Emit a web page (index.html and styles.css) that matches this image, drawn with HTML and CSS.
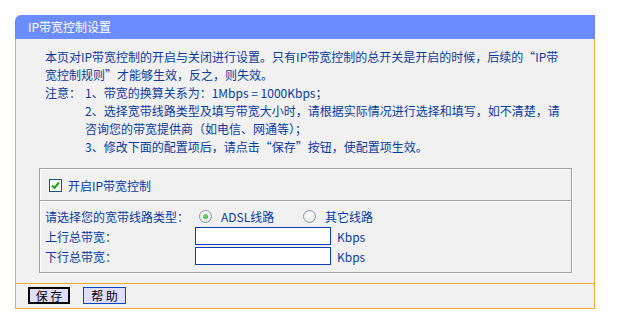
FILE: index.html
```html
<!DOCTYPE html>
<html lang="zh-CN">
<head>
<meta charset="utf-8">
<title>IP带宽控制设置</title>
<link rel="stylesheet" href="styles.css">
</head>
<body>
<div class="panel">
  <div class="title">IP带宽控制设置</div>
  <div class="content">
    <div class="intro">
      <p>本页对IP带宽控制的开启与关闭进行设置。只有IP带宽控制的总开关是开启的时候，后续的“IP带<br>宽控制规则”才能够生效，反之，则失效。</p>
      <div class="note">
        <span class="note-label">注意：</span>
        <div class="note-items">
          <div>1、带宽的换算关系为：1Mbps = 1000Kbps；</div>
          <div>2、选择宽带线路类型及填写带宽大小时，请根据实际情况进行选择和填写，如不清楚，请<br>咨询您的带宽提供商（如电信、网通等）；</div>
          <div>3、修改下面的配置项后，请点击“保存”按钮，使配置项生效。</div>
        </div>
      </div>
    </div>
    <div class="box">
      <div class="box-head">
        <label class="check">
          <span class="checkbox"><svg width="9" height="9" viewBox="0 0 9 9"><path d="M1 4.5 L3.5 7 L8 1.5" fill="none" stroke="#22a122" stroke-width="2"/></svg></span>
          <span>开启IP带宽控制</span>
        </label>
      </div>
      <div class="box-body">
        <span class="lbl">请选择您的宽带线路类型：</span>
        <div class="radios">
          <label class="opt"><span class="radio checked"></span>ADSL线路</label>
          <label class="opt"><span class="radio"></span>其它线路</label>
        </div>
        <span class="lbl">上行总带宽：</span>
        <div class="field"><input class="txt" type="text"><span class="unit">Kbps</span></div>
        <span class="lbl">下行总带宽：</span>
        <div class="field"><input class="txt" type="text"><span class="unit">Kbps</span></div>
      </div>
    </div>
  </div>
  <div class="actions">
    <button class="btn btn-default">保 存</button>
    <button class="btn">帮 助</button>
  </div>
</div>
</body>
</html>
```

FILE: styles.css
```css
* { box-sizing: border-box; }
html, body { margin: 0; padding: 0; background: #fff; }
body {
  padding: 15px 0 0 15px;
  font-family: "Noto Sans CJK SC", "Noto Sans", sans-serif;
  font-size: 12px;
  color: #0b3a9e;
}
.panel { width: 580px; }
.title {
  height: 24px;
  background: #6b8cff;
  color: #fff;
  line-height: 24px;
  padding-left: 13px;
  border-top-left-radius: 6px;
}
.content {
  background: #f1f1f1;
  border-left: 1px solid #f5a832;
  border-right: 1px solid #f5a832;
  padding: 9px 22px 10px 23px;
}
.intro { padding: 0 6px; line-height: 18px; }
.intro p { margin: 0; }
.note { display: grid; grid-template-columns: 40px 1fr; }
.box {
  margin-top: 12px;
  border: 1px solid #a0a0a0;
  box-shadow: inset 1px 1px 0 #fff, 1px 1px 0 #fff;
}
.box-head {
  height: 31px;
  display: flex;
  align-items: center;
  padding-left: 9px;
  padding-top: 1px;
}
.check { display: flex; align-items: center; gap: 6px; }
.checkbox {
  width: 13px; height: 13px;
  border: 1px solid #1c5180;
  background: #fff;
  display: flex; align-items: center; justify-content: center;
}
.box-body {
  border-top: 1px solid #a0a0a0;
  box-shadow: inset 0 1px 0 #fff;
  padding: 5px 0 6px 5px;
  display: grid;
  grid-template-columns: 150px 1fr;
  grid-auto-rows: 20px;
  align-items: center;
}
.radios { display: flex; padding-left: 4px; }
.opt { display: flex; align-items: center; gap: 9px; width: 104px; }
.radio {
  width: 13px; height: 13px;
  border-radius: 50%;
  border: 1px solid #8a98a6;
  background: radial-gradient(circle at 40% 35%, #fff 0, #f0f0f0 50%, #d6d6d6 100%);
  display: flex; align-items: center; justify-content: center;
}
.radio.checked::after {
  content: "";
  width: 5px; height: 5px; border-radius: 50%;
  background: radial-gradient(circle at 40% 40%, #7be07b, #1fa51f);
}
.field { display: flex; align-items: center; }
.txt {
  width: 136px; height: 18px;
  border: 1px solid #0b3fb0;
  background: #fff;
  margin: 0; padding: 0 2px;
  font: inherit;
}
.unit { margin-left: 6px; }
.actions {
  background: #f1f1f1;
  border: 1px solid #f5a832;
  padding: 3px 12px 4px;
  display: flex;
  gap: 13px;
}
.btn {
  width: 42px; height: 17px;
  padding: 0; margin: 0;
  background: #e0dcff;
  border: 1px solid #0b44c4;
  color: #000;
  font-family: "Noto Sans CJK SC", sans-serif;
  font-size: 12px;
  line-height: 15px;
}
.btn + .btn { width: 43px; }
.btn-default { border: 2px solid #000; line-height: 13px; }
```
